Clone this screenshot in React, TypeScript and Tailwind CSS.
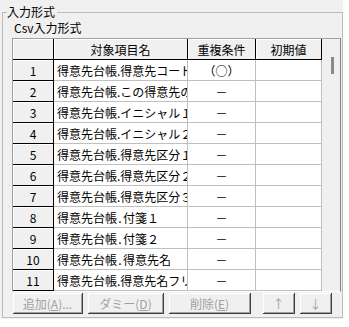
import React from "react";

const rows = [
  { name: "得意先台帳.得意先コード", dup: "（○）" },
  { name: "得意先台帳.この得意先の請求先", dup: "－" },
  { name: "得意先台帳.イニシャル１", dup: "－" },
  { name: "得意先台帳.イニシャル２", dup: "－" },
  { name: "得意先台帳.得意先区分１", dup: "－" },
  { name: "得意先台帳.得意先区分２", dup: "－" },
  { name: "得意先台帳.得意先区分３", dup: "－" },
  { name: "得意先台帳.付箋１", dup: "－" },
  { name: "得意先台帳.付箋２", dup: "－" },
  { name: "得意先台帳.得意先名", dup: "－" },
  { name: "得意先台帳.得意先名フリガナ", dup: "－" },
];

const headCell =
  "h-[21px] bg-[#f0f0f0] border-r border-b border-black shadow-[inset_1px_1px_0_#ffffff] flex items-center justify-center";
const dataCell = "h-[21px] bg-white border-r border-b border-[#c0c0c0] flex items-center";

// the period is half width (6px) in the original UI font
function ItemName({ name }: { name: string }) {
  const [table, field] = name.split(".");
  return (
    <>
      {table}
      <span className="inline-block w-[6px] text-center">.</span>
      {field}
    </>
  );
}

function Btn({ children, w }: { children: React.ReactNode; w: string }) {
  return (
    <div
      className={`${w} h-[21px] flex items-center justify-center bg-[#f0f0f0] text-[#a0a0a0] border-r border-b border-[#404040] shadow-[inset_1px_1px_0_#ffffff,inset_-1px_-1px_0_#a0a0a0]`}
    >
      {children}
    </div>
  );
}

export default function App() {
  return (
    <div
      className="w-[349px] h-[327px] bg-white text-[12px] leading-[15px] text-black overflow-hidden"
      style={{ fontFamily: '"Noto Sans CJK JP", "Liberation Sans", sans-serif' }}
    >
      <div className="w-[343px] h-[319px] bg-[#f0f0f0] pt-[5px] pl-[2px]">
        <fieldset className="w-[341px] h-[313px] border border-[#bcbcbc]">
          <legend className="ml-[4px] pr-[2px] leading-[14px]">入力形式</legend>
          <div className="ml-[11px] mt-[1px] h-[15px]">Csv入力形式</div>
          <div className="ml-[9px] mt-[3px] w-[329px] border border-t-[#a0a0a0] border-l-[#a0a0a0] border-r-[#808080] border-b-[#ffffff] flex">
            <div className="grid grid-cols-[41px_134px_68px_66px] bg-white">
              <div className={headCell}></div>
              <div className={headCell}>対象項目名</div>
              <div className={headCell}>重複条件</div>
              <div className={headCell}>初期値</div>
              {rows.map((r, i) => (
                <React.Fragment key={i}>
                  <div className={headCell}>{i + 1}</div>
                  <div className={`${dataCell} pl-[3px] overflow-hidden whitespace-nowrap`}>
                    <ItemName name={r.name} />
                  </div>
                  <div className={`${dataCell} justify-center`}>{r.dup}</div>
                  <div className={dataCell}></div>
                </React.Fragment>
              ))}
            </div>
            <div className="w-[18px] bg-[#f0f0f0] pt-[18px] pl-[9px]">
              <div className="w-[3px] h-[17px] bg-[#8a8a8a]"></div>
            </div>
          </div>
          <div className="ml-[10px] mt-[1px] flex">
            <Btn w="w-[70px]">
              追加(<span className="underline">A</span>)...
            </Btn>
            <div className="w-[5px]" />
            <Btn w="w-[76px]">
              ダミー(<span className="underline">D</span>)
            </Btn>
            <div className="w-[5px]" />
            <Btn w="w-[82px]">
              削除(<span className="underline">E</span>)
            </Btn>
            <div className="w-[12px]" />
            <Btn w="w-[32px]">↑</Btn>
            <div className="w-[5px]" />
            <Btn w="w-[32px]">↓</Btn>
          </div>
        </fieldset>
      </div>
    </div>
  );
}
